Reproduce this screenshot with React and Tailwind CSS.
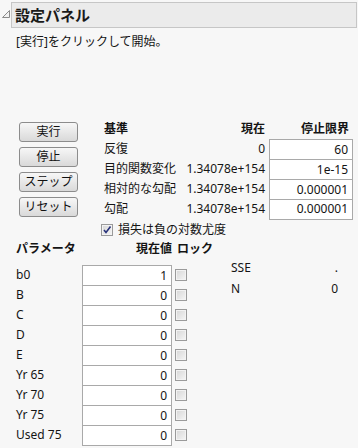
const criteria = [
  { label: '反復', current: '0', limit: '60' },
  { label: '目的関数変化', current: '1.34078e+154', limit: '1e-15' },
  { label: '相対的な勾配', current: '1.34078e+154', limit: '0.000001' },
  { label: '勾配', current: '1.34078e+154', limit: '0.000001' },
]

const params = [
  { name: 'b0', value: '1' },
  { name: 'B', value: '0' },
  { name: 'C', value: '0' },
  { name: 'D', value: '0' },
  { name: 'E', value: '0' },
  { name: 'Yr 65', value: '0' },
  { name: 'Yr 70', value: '0' },
  { name: 'Yr 75', value: '0' },
  { name: 'Used 75', value: '0' },
]

function Button({ children }) {
  return (
    <div className="w-[59px] h-[20px] rounded-[3px] border border-[#8c8c8c] bg-linear-to-b from-[#f7f7f7] to-[#d9d9d9] flex items-center justify-center text-[12px] leading-none text-[#111]">
      {children}
    </div>
  )
}

function Box({ checked }) {
  return (
    <div className="w-[12px] h-[12px] border border-[#9a9a9a] bg-linear-to-br from-[#d6d6d6] to-[#f6f6f6] shadow-[inset_0_0_0_1px_#f3f3f3] flex items-center justify-center">
      {checked && (
        <svg width="10" height="10" viewBox="0 0 10 10">
          <path d="M2 5 L4 7.5 L8.5 1.5" fill="none" stroke="#28327a" strokeWidth="1.6" />
        </svg>
      )}
    </div>
  )
}

export default function App() {
  return (
    <div className="w-[358px] h-[448px] overflow-hidden bg-[#f7f7f7] text-[12px] text-[#141414] font-['Noto_Sans','Noto_Sans_CJK_JP',sans-serif]">
      <div className="flex items-center pt-[2px]">
        <svg width="11" height="26" viewBox="0 0 11 26">
          <path d="M2.5 15.5 L9.5 15.5 L9.5 8.5 Z" fill="#f2f2f2" stroke="#8a8a8a" />
        </svg>
        <div className="flex-1 h-[26px] mr-px border border-[#c6c6c6] bg-[#ebebeb] flex items-center pl-[3px]">
          <span className="text-[15px] font-bold leading-none text-[#1a1a1a]">設定パネル</span>
        </div>
      </div>

      <div className="mt-[6px] pl-[16px] leading-[16px]">[実行]をクリックして開始。</div>

      <div className="mt-[69px] flex">
        <div className="ml-[19px] pt-[3px] flex flex-col gap-[5px]">
          <Button>実行</Button>
          <Button>停止</Button>
          <Button>ステップ</Button>
          <Button>リセット</Button>
        </div>

        <div className="ml-[26px] w-[249px]">
          <div className="h-[20px] flex items-center font-bold leading-none">
            <span className="flex-1">基準</span>
            <span>現在</span>
            <span className="ml-[4px] w-[84px] pr-[4px] text-right">停止限界</span>
          </div>
          {criteria.map((row, i) => (
            <div key={row.label} className="h-[20px] flex items-center leading-none">
              <span className="flex-1">{row.label}</span>
              <span>{row.current}</span>
              <div
                className={
                  'ml-[4px] w-[84px] border-x border-t border-[#a9a9a9] bg-white flex items-center justify-end pr-[4px] ' +
                  (i === criteria.length - 1 ? 'h-[21px] border-b' : 'h-[20px]')
                }
              >
                {row.limit}
              </div>
            </div>
          ))}
        </div>
      </div>

      <div className="h-[22px] pl-[101px] flex items-center gap-[5px] leading-none">
        <Box checked />
        <span>損失は負の対数尤度</span>
      </div>

      <div className="flex">
        <div className="pl-[16px] w-[187px] shrink-0">
          <div className="h-[16px] flex items-center font-bold leading-none mb-[8px] whitespace-nowrap">
            <span className="w-[66px] shrink-0">パラメータ</span>
            <span className="w-[90px] shrink-0 text-right">現在値</span>
            <span className="ml-[5px] shrink-0">ロック</span>
          </div>
          {params.map((p, i) => (
            <div key={p.name} className="h-[20px] flex items-start leading-none">
              <span className="w-[66px] h-[20px] flex items-center">{p.name}</span>
              <div
                className={
                  'w-[90px] border-x border-t border-[#a9a9a9] bg-white flex items-center justify-end pr-[4px] ' +
                  (i === params.length - 1 ? 'h-[21px] border-b' : 'h-[20px]')
                }
              >
                {p.value}
              </div>
              <div className="h-[20px] ml-[3px] flex items-center">
                <Box />
              </div>
            </div>
          ))}
        </div>

        <div className="ml-[44px] mt-[16px] w-[107px] leading-none">
          <div className="h-[21px] flex items-center justify-between">
            <span>SSE</span>
            <span>.</span>
          </div>
          <div className="h-[21px] flex items-center justify-between">
            <span>N</span>
            <span>0</span>
          </div>
        </div>
      </div>
    </div>
  )
}
